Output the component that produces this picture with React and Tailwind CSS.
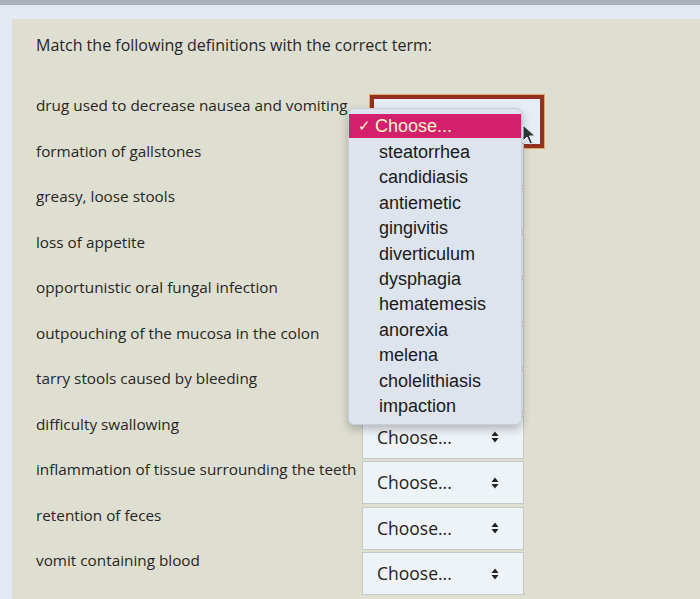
const rows = [
  "drug used to decrease nausea and vomiting",
  "formation of gallstones",
  "greasy, loose stools",
  "loss of appetite",
  "opportunistic oral fungal infection",
  "outpouching of the mucosa in the colon",
  "tarry stools caused by bleeding",
  "difficulty swallowing",
  "inflammation of tissue surrounding the teeth",
  "retention of feces",
  "vomit containing blood",
];

const options = [
  "steatorrhea",
  "candidiasis",
  "antiemetic",
  "gingivitis",
  "diverticulum",
  "dysphagia",
  "hematemesis",
  "anorexia",
  "melena",
  "cholelithiasis",
  "impaction",
];

function Arrows() {
  return (
    <svg width="8" height="12" viewBox="0 0 8 12" className="shrink-0">
      <path d="M4 0.5 L7.5 5 H0.5 Z" fill="#222" />
      <path d="M4 11.5 L7.5 7 H0.5 Z" fill="#222" />
    </svg>
  );
}

// rows 2-7 sit behind the open menu, so their text is not drawn
function Select({ focused, covered }) {
  if (focused) {
    return (
      <div className="ml-[8px] h-[53px] w-[174px] border-[4px] border-[#93301f] bg-[#e6edf4] shadow-[0_0_0_1px_#e8a46a]" />
    );
  }
  return (
    <div className="mt-[2px] flex h-[43px] w-[162px] items-center justify-between border border-[#c4c8c6] bg-[#eef3f8] pl-[14px] pr-[24px]">
      {!covered && (
        <>
          <span className="text-[17.5px] text-[#222]">Choose...</span>
          <Arrows />
        </>
      )}
    </div>
  );
}

export default function App() {
  return (
    <div
      className="relative h-[599px] w-[700px] overflow-hidden bg-[#e3e9f2]"
      style={{ fontFamily: '"Open Sans", "Liberation Sans", sans-serif' }}
    >
      <div className="h-[5px] bg-[#aab0ba]" />
      <div className="ml-[12px] mt-[14px] h-[600px] bg-[#dedfd1] pl-[24px] pt-[15px]">
        <h1 className="text-[16px] leading-[22px] text-[#262626]">
          Match the following definitions with the correct term:
        </h1>
        <div className="mt-[39px] flex flex-col">
          {rows.map((label, i) => (
            <div key={label} className="flex h-[45.5px] items-start">
              <div className="w-[326px] shrink-0 text-[15.3px] leading-[20px] text-[#262626]">
                {label}
              </div>
              <Select focused={i === 0} covered={i > 0 && i < 7} />
            </div>
          ))}
        </div>
      </div>

      {/* open dropdown menu */}
      <div
        className="absolute left-[348px] top-[108px] w-[174px] rounded-[6px] border border-[#c9cfd8] bg-[#dde4ee] py-[5px] shadow-[0_4px_10px_rgba(0,0,0,0.25)]"
        style={{ fontFamily: '"Liberation Sans", Arial, sans-serif' }}
      >
        <div className="flex h-[24px] items-center gap-[4px] bg-[#d4206c] pl-[9px] text-[18px] text-[#fff5cf]">
          <span className="text-[15px]">✓</span>
          <span>Choose...</span>
        </div>
        <div className="mt-[2px] flex flex-col pl-[30px]">
          {options.map((o) => (
            <div key={o} className="h-[25.4px] text-[18px] leading-[25px] text-[#1a1a1a]">
              {o}
            </div>
          ))}
        </div>
      </div>

      {/* mouse pointer */}
      <svg className="absolute left-[522px] top-[124px]" width="14" height="22" viewBox="0 0 14 22">
        <path d="M1 1 L1 17 L5 13 L8 20 L10.5 19 L7.5 12 L13 12 Z" fill="#2e3530" stroke="#eef" strokeWidth="1" />
      </svg>
    </div>
  );
}
